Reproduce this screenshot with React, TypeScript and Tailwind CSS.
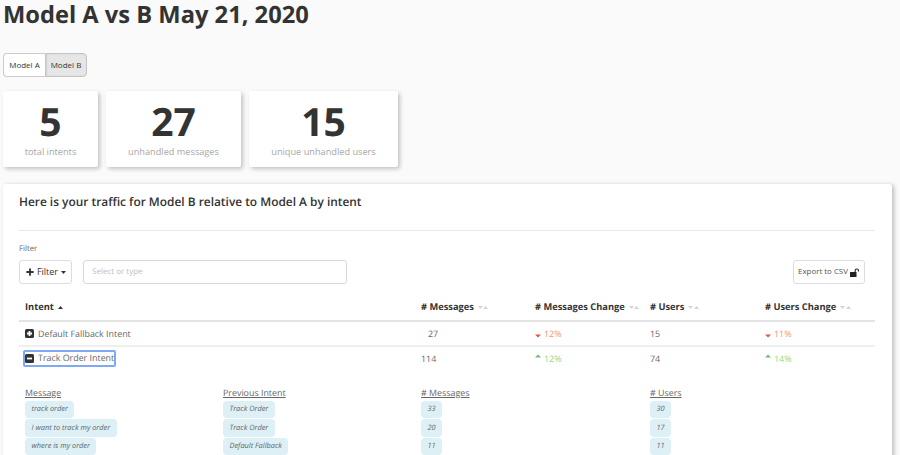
import { Plus } from "lucide-react";

const GRID = "grid grid-cols-[402px_114px_115px_115px_110px]";
const SUB_GRID = "grid grid-cols-[198px_198px_229px_150px]";

const stats = [
  { value: "5", label: "total intents", width: "w-[95px]" },
  { value: "27", label: "unhandled messages", width: "w-[135px]" },
  { value: "15", label: "unique unhandled users", width: "w-[149px]" },
];

const columns = ["# Messages", "# Messages Change", "# Users", "# Users Change"];

const SortCarets = () => (
  <span className="ml-[4px] inline-flex gap-[0.5px]">
    <svg width="5" height="3" viewBox="0 0 5 3" className="fill-[#d4d4d4]">
      <path d="M0 0h5L2.5 3z" />
    </svg>
    <svg width="5" height="3" viewBox="0 0 5 3" className="fill-[#d4d4d4]">
      <path d="M0 3h5L2.5 0z" />
    </svg>
  </span>
);

const Delta = ({ up, value }: { up: boolean; value: string }) => (
  <span className={`flex items-center gap-[3px] ${up ? "text-[#8ed88e]" : "text-[#fb8f82]"}`}>
    <svg width="6" height="8" viewBox="0 0 6 8" className={up ? "fill-[#6cc06c]" : "fill-[#f0503c]"}>
      {up ? <path d="M0 3.5h6L3 0.5z" /> : <path d="M0 4.5h6L3 7.5z" />}
    </svg>
    {value}
  </span>
);

const ExpandIcon = ({ open }: { open: boolean }) => (
  <span className="flex h-[9px] w-[9px] shrink-0 items-center justify-center rounded-[1.5px] bg-[#333333]">
    <svg width="7" height="7" viewBox="0 0 7 7" className="fill-white">
      {open ? <path d="M1 2.6h5v1.8H1z" /> : <path d="M2.6 1h1.8v1.6H6v1.8H4.4V6H2.6V4.4H1V2.6h1.6z" />}
    </svg>
  </span>
);

const Chip = ({ children }: { children: string }) => (
  <span className="flex h-[17.5px] w-fit items-center rounded-[4px] bg-[#dcf0f6] px-[6.5px] pt-[1px] text-[7.4px] text-[#666666] italic">
    {children}
  </span>
);

const subColumns = [
  { title: "Message", items: ["track order", "I want to track my order", "where is my order"] },
  { title: "Previous Intent", items: ["Track Order", "Track Order", "Default Fallback"] },
  { title: "# Messages", items: ["33", "20", "11"] },
  { title: "# Users", items: ["30", "17", "11"] },
];

export default function App() {
  return (
    <div className="h-[455px] w-[900px] overflow-hidden bg-[#fafafa] font-['Open_Sans',sans-serif] text-[#333333] [text-rendering:geometricPrecision]">
      <h1 className="pl-[3px] text-[23.7px] leading-[28px] font-bold">Model A vs B May 21, 2020</h1>

      <div className="mt-[25px] ml-[3px] flex h-[24px] w-fit text-[8px] text-[#333333]">
        <button className="flex w-[42px] items-center justify-center rounded-l-[4px] border border-r-0 border-[#cccccc] bg-white">
          Model A
        </button>
        <button className="flex w-[42px] items-center justify-center rounded-r-[4px] border border-[#c4c4c4] bg-[#e6e6e6] shadow-[inset_1px_0_2px_rgba(0,0,0,0.1)]">
          Model B
        </button>
      </div>

      <div className="mt-[14px] ml-[3px] flex gap-[8px]">
        {stats.map((s) => (
          <div
            key={s.label}
            className={`${s.width} flex h-[76px] flex-col items-center rounded-[2px] bg-white pt-[8px] shadow-[2px_2px_4px_rgba(0,0,0,0.22)]`}
          >
            <span className="text-[39px] leading-[46px] font-bold">{s.value}</span>
            <span className="text-[9.2px] leading-[14px] text-[#a8a8a8]">{s.label}</span>
          </div>
        ))}
      </div>

      <div className="mt-[17px] ml-[3px] h-[300px] w-[889px] rounded-[3px] bg-white pt-[10px] pr-[17px] pl-[16px] shadow-[2px_1px_4px_rgba(0,0,0,0.25)]">
        <h2 className="text-[11.9px] leading-[16px] font-semibold">
          Here is your traffic for Model B relative to Model A by intent
        </h2>
        <div className="mt-[20px] border-t border-[#e9e9e9]" />

        <div className="mt-[13px] text-[7.8px] leading-[11px] text-[#666666]">Filter</div>
        <div className="mt-[5px] flex h-[24px] items-stretch">
          <button className="flex w-[53px] items-center justify-center gap-[2px] rounded-[3px] border border-[#dddddd] bg-white text-[9px] text-[#333333]">
            <Plus size={10} strokeWidth={4.5} />
            Filter
            <svg width="5" height="3" viewBox="0 0 5 3" className="ml-[1px] fill-[#333333]">
              <path d="M0 0h5L2.5 3z" />
            </svg>
          </button>
          <div className="ml-[11px] flex w-[264px] items-center rounded-[3px] border border-[#d8d8d8] bg-white pl-[8px] text-[8px] text-[#c0c0c0]">
            Select or type
          </div>
          <button className="mr-[10px] ml-auto flex w-[72px] items-center justify-center gap-[2px] rounded-[3px] border border-[#dddddd] bg-white text-[7.9px] text-[#555555]">
            Export to CSV
            <svg width="10" height="9" viewBox="0 0 10 9" className="fill-[#222222]">
              <path d="M0 4h6.5v5H0z" />
              <path d="M4.6 4.2V2.6a2.2 2.2 0 0 1 4.4 0v1h-1.1v-1a1.1 1.1 0 0 0-2.2 0v1.6z" />
            </svg>
          </button>
        </div>

        <div className={`${GRID} mt-[16px] h-[22px] items-start border-b-2 border-[#e4e4e4] text-[9.3px] leading-[14px] font-bold`}>
          <div className="flex items-center pl-[6px]">
            Intent
            <svg width="5" height="3" viewBox="0 0 5 3" className="ml-[4px] fill-[#333333]">
              <path d="M0 3h5L2.5 0z" />
            </svg>
          </div>
          {columns.map((c) => (
            <div key={c} className="flex items-center whitespace-nowrap">
              {c}
              <SortCarets />
            </div>
          ))}
        </div>

        <div className={`${GRID} h-[25px] items-center border-b-2 border-[#efefef] pt-[1px] text-[8.9px] text-[#666666]`}>
          <div className="flex items-center gap-[4px] pl-[6px]">
            <ExpandIcon open={false} />
            Default Fallback Intent
          </div>
          <div className="pl-[7px]">27</div>
          <Delta up={false} value="12%" />
          <div>15</div>
          <Delta up={false} value="11%" />
        </div>

        <div className={`${GRID} h-[23px] items-center text-[8.9px] text-[#666666]`}>
          <div className="pl-[4px]">
            <div className="flex h-[17px] w-[93px] items-center gap-[4px] rounded-[2px] border-2 border-[#7fa9f0] leading-none whitespace-nowrap">
              <ExpandIcon open />
              Track Order Intent
            </div>
          </div>
          <div>114</div>
          <Delta up value="12%" />
          <div>74</div>
          <Delta up value="14%" />
        </div>

        <div className={`${SUB_GRID} mt-[16px] pl-[6px]`}>
          {subColumns.map((col) => (
            <div key={col.title}>
              <div className="mb-[1.5px] text-[8.9px] leading-[13px] text-[#666666] underline">{col.title}</div>
              <div className="flex flex-col gap-[1px]">
                {col.items.map((item, i) => (
                  <Chip key={i}>{item}</Chip>
                ))}
              </div>
            </div>
          ))}
        </div>
      </div>
    </div>
  );
}
